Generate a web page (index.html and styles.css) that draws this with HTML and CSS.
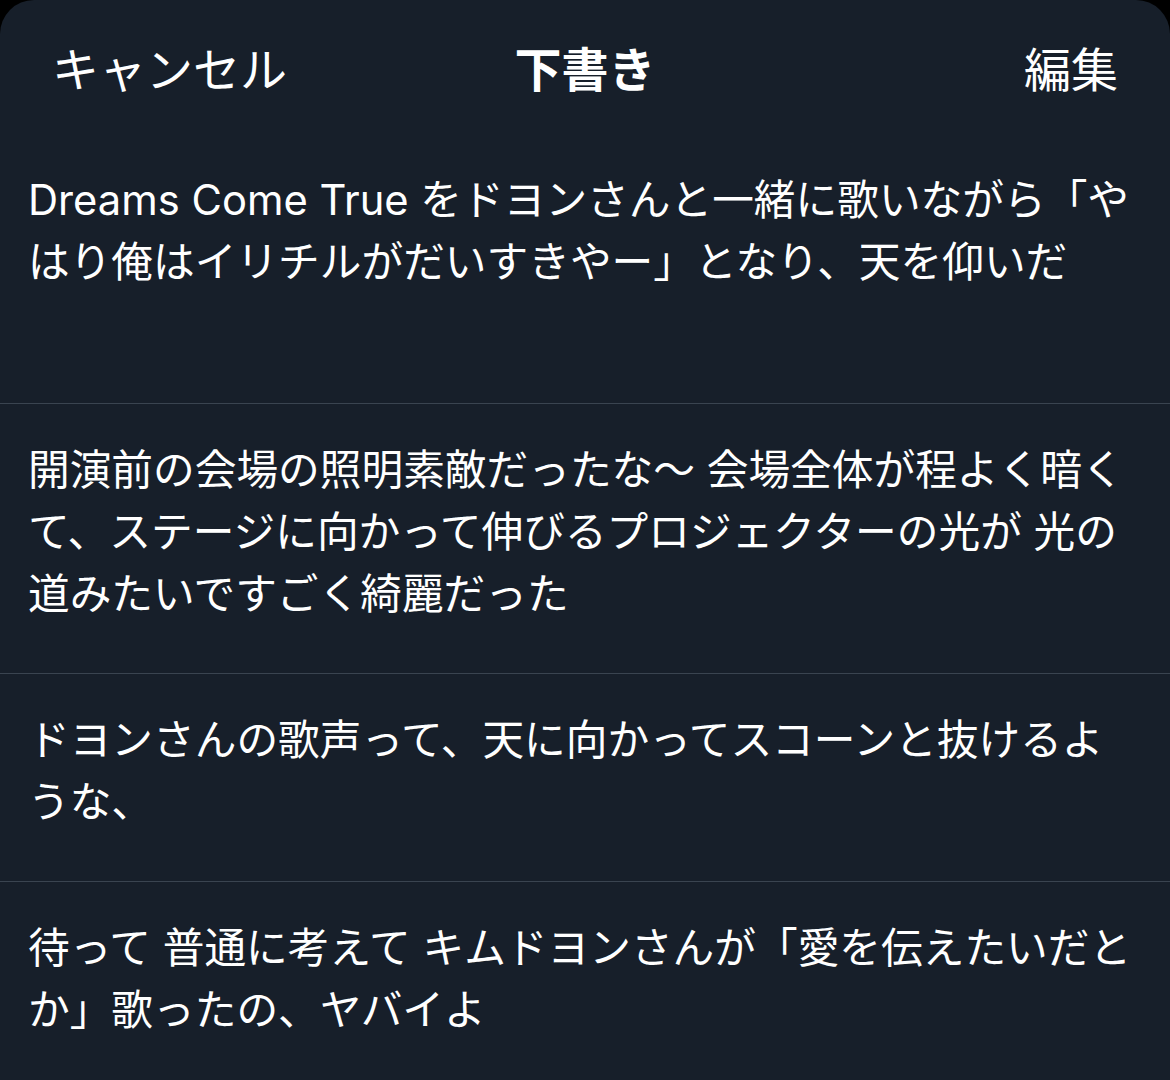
FILE: index.html
```html
<!DOCTYPE html>
<html lang="ja">
<head>
<meta charset="utf-8">
<title>下書き</title>
<link rel="stylesheet" href="styles.css">
</head>
<body>
<div class="sheet">
  <header class="bar">
    <span class="bar-btn bar-left">キャンセル</span>
    <span class="bar-title">下書き</span>
    <span class="bar-btn bar-right">編集</span>
  </header>
  <ul class="drafts">
    <li class="draft draft-first">Dreams Come True をドヨンさんと一緒に歌いながら「や<br>はり俺はイリチルがだいすきやー」となり、天を仰いだ</li>
    <li class="draft">開演前の会場の照明素敵だったな〜 会場全体が程よく暗く<br>て、ステージに向かって伸びるプロジェクターの光が 光の<br>道みたいですごく綺麗だった</li>
    <li class="draft">ドヨンさんの歌声って、天に向かってスコーンと抜けるよ<br>うな、</li>
    <li class="draft">待って 普通に考えて キムドヨンさんが「愛を伝えたいだと<br>か」歌ったの、ヤバイよ</li>
  </ul>
</div>
</body>
</html>
```
FILE: styles.css
```css
html, body {
  margin: 0;
  padding: 0;
  background: #000;
}
body {
  width: 1170px;
  height: 1080px;
  overflow: hidden;
  font-family: Inter, "Noto Sans CJK JP", sans-serif;
  color: #fff;
}
.sheet {
  background: #171f2a;
  border-radius: 34px 34px 0 0;
  height: 1080px;
}
.bar {
  height: 132px;
  display: grid;
  grid-template-columns: 1fr auto 1fr;
  align-items: center;
  padding: 0 52px;
  font-family: "Noto Sans CJK JP", sans-serif;
  font-size: 47px;
  line-height: 1;
}
.bar-btn {
  font-weight: 400;
}
.bar-right {
  justify-self: end;
}
.bar-title {
  font-weight: 700;
}
.drafts {
  list-style: none;
  margin: 0;
  padding: 0;
}
.draft {
  padding: 35px 40px 48px 28px;
  font-size: 41.7px;
  line-height: 62px;
  white-space: nowrap;
  border-bottom: 1px solid #3a4450;
}
.draft-first {
  padding-top: 37px;
  padding-bottom: 110px;
}
```
